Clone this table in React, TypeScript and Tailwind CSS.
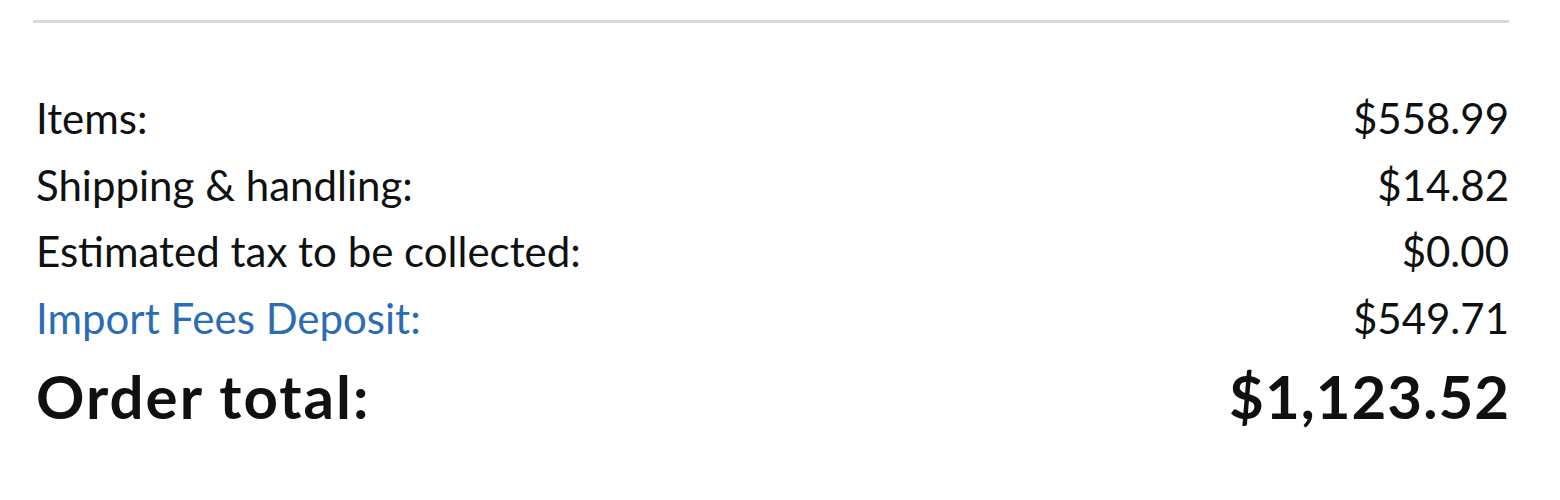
const rows = [
  { label: "Items:", amount: "$558.99" },
  { label: "Shipping & handling:", amount: "$14.82" },
  { label: "Estimated tax to be collected:", amount: "$0.00" },
  { label: "Import Fees Deposit:", amount: "$549.71", link: true },
];

export default function App() {
  return (
    <div className="bg-white h-[500px] pl-[33px] pr-[51px] pt-[20px] font-['Lato',sans-serif] text-[#0f1111]">
      <div className="border-t-[3px] border-[#d5d9d9]" />
      <div className="pt-[62px] pl-[3px]">
        {rows.map((r) => (
          <div key={r.label} className="flex justify-between text-[42px] leading-[66.5px]">
            <span className={r.link ? "text-[#2b6cb5]" : ""}>{r.label}</span>
            <span>{r.amount}</span>
          </div>
        ))}
        <div className="flex justify-between text-[60px] leading-[90px] font-bold">
          <span className="tracking-[2px]">Order total:</span>
          <span className="tracking-[1px] -mr-[1px]">$1,123.52</span>
        </div>
      </div>
    </div>
  );
}
